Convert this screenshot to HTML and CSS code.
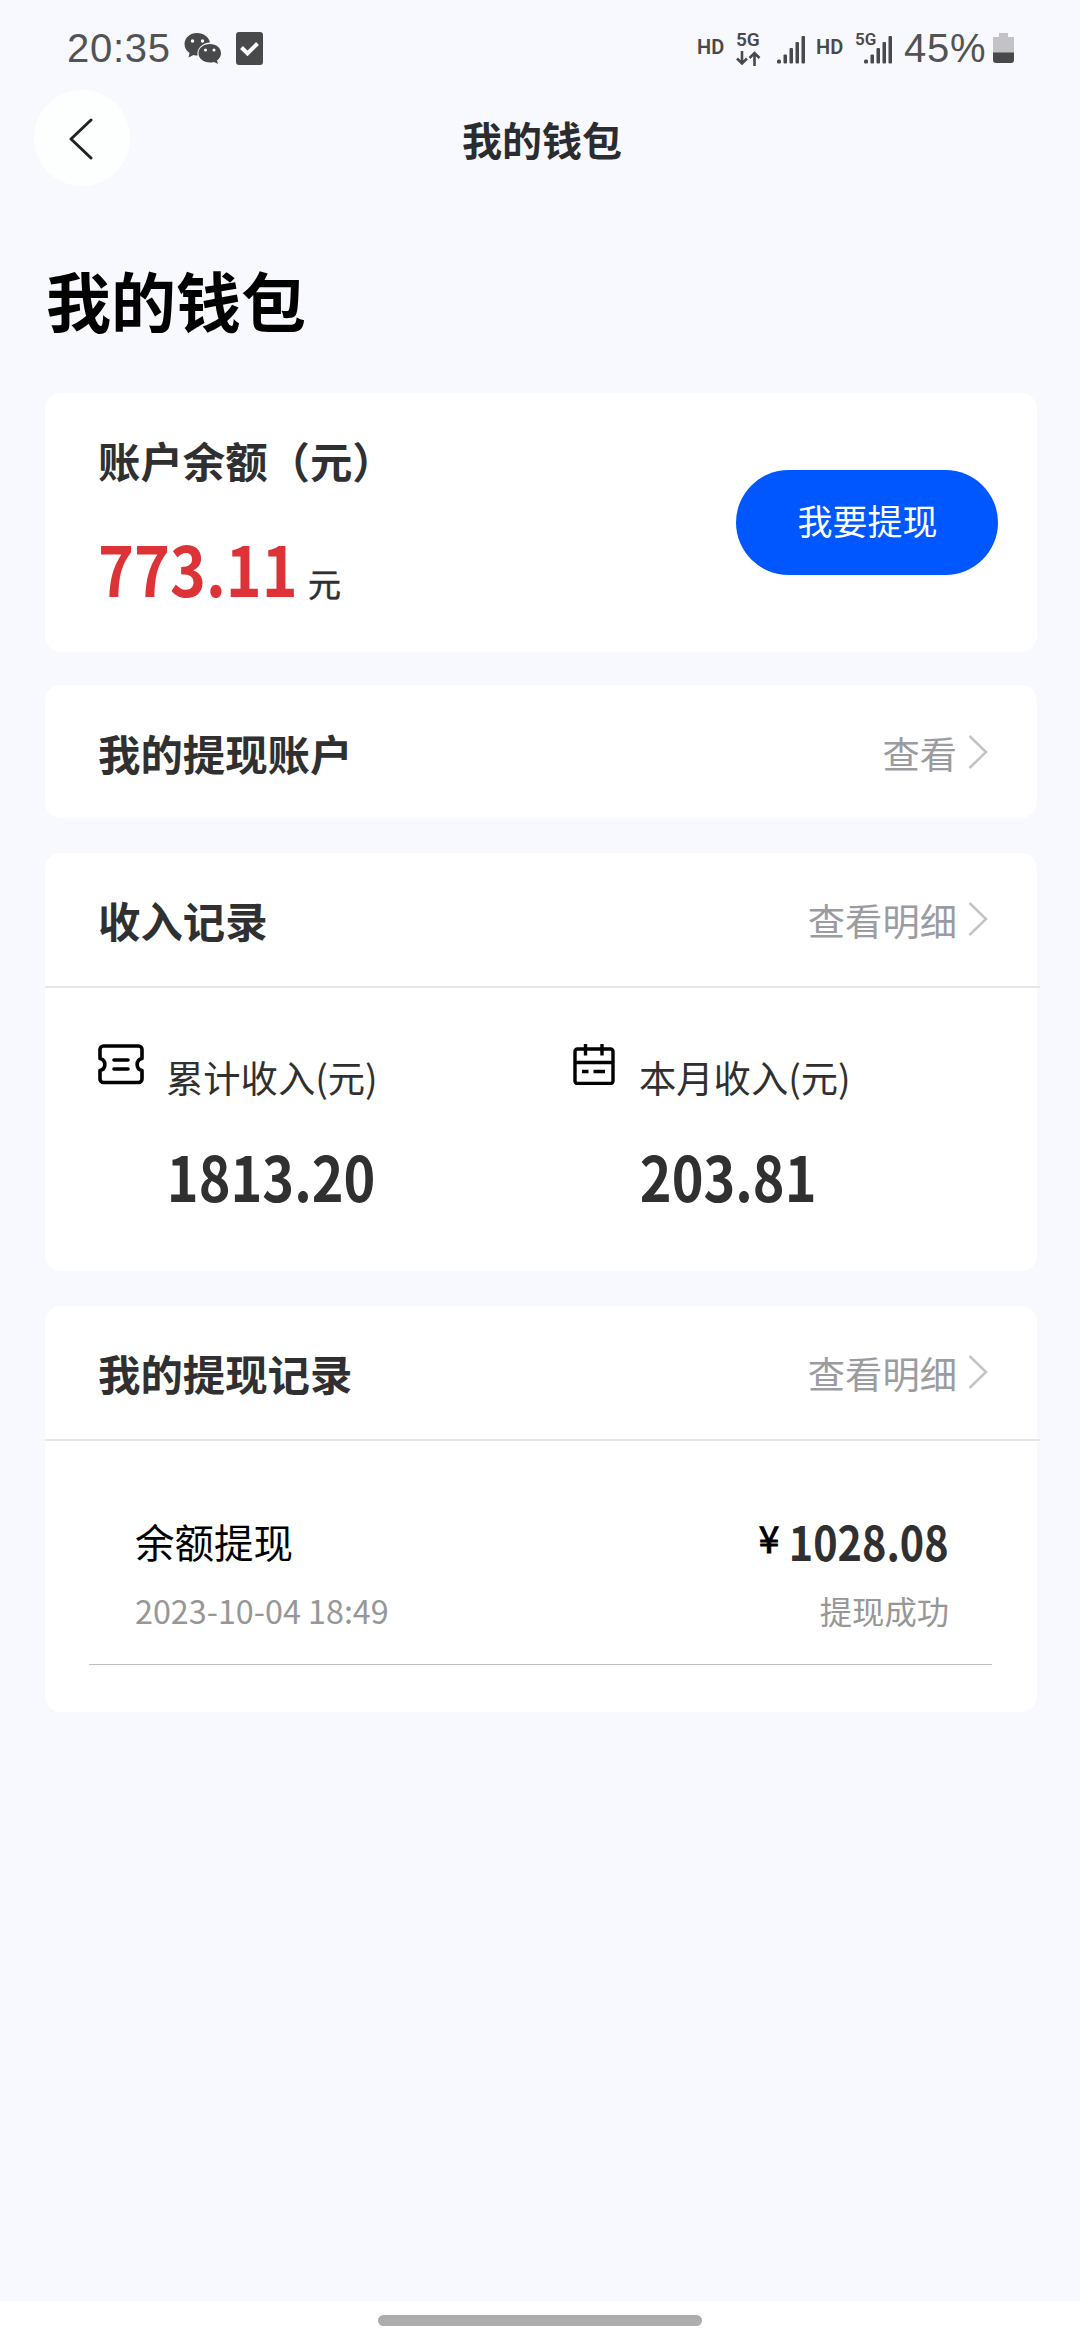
FILE: index.html
```html
<!DOCTYPE html>
<html lang="zh-CN">
<head>
    <meta charset="UTF-8">
    <meta name="viewport" content="width=device-width, initial-scale=1.0">
    <title>我的钱包</title>
    <link rel="stylesheet" href="styles.css">
</head>
<body>

<!-- Status bar -->
<div class="status-bar">
    <div class="status-left">
        <span class="time">20:35</span>
        <svg class="wechat" width="38" height="31" viewBox="0 0 38 31">
            <path fill="#48494b" d="M13 0C6 0 .5 4.800.5 11c0 4 2 7 5 9L4.500 24.500l5-2.500c1.500.4 2.500.5 4 .5C12.500 15 19 9.500 26 9.500 25 4 19.500 0 13 0z"/>
            <path fill="#48494b" d="M26 11c-6.500 0-11.500 4-11.500 9.300S19.500 29.500 26 29.500c1.500 0 2.700-.2 4-.6l4 2-1-3.400c2.500-1.700 4-4.200 4-7.200C37 15 32.500 11 26 11z"/>
            <circle cx="8.500" cy="8" r="1.700" fill="#fff"/>
            <circle cx="18.500" cy="8" r="1.700" fill="#fff"/>
            <circle cx="21.500" cy="17" r="1.500" fill="#fff"/>
            <circle cx="30" cy="17" r="1.500" fill="#fff"/>
        </svg>
        <svg class="check" width="27" height="33" viewBox="0 0 27 33">
            <rect width="27" height="33" rx="3" fill="#48494b"/>
            <path d="M5.500 15.500l6 6L21.500 11.500" fill="none" stroke="#fff" stroke-width="4"/>
        </svg>
    </div>
    <div class="status-right">
        <span class="hd">HD</span>
        <div class="net">
            <span>5G</span>
            <svg width="26" height="15" viewBox="0 0 26 15" fill="none" stroke="#48494b" stroke-width="2.600">
                <path d="M6 0v13M1 7.500l5 5 5-5M18.500 15V2M13.500 7l5-5 5 5"/>
            </svg>
        </div>
        <svg class="signal" width="28" height="28" viewBox="0 0 28 28" fill="#48494b">
            <rect x="0" y="23.500" width="4" height="4" rx="1.500"/>
            <rect x="6.500" y="18.500" width="3.500" height="9" rx="1"/>
            <rect x="12.500" y="12" width="3.500" height="15.500" rx="1"/>
            <rect x="18.500" y="6" width="3.500" height="21.500" rx="1"/>
            <rect x="24.500" y="0" width="3.500" height="27.500" rx="1"/>
        </svg>
        <span class="hd hd-second">HD</span>
        <div class="signal-5g">
            <span>5G</span>
            <svg width="28" height="28" viewBox="0 0 28 28" fill="#48494b">
                <rect x="0" y="23.500" width="4" height="4" rx="1.500"/>
                <rect x="6.500" y="18.500" width="3.500" height="9" rx="1"/>
                <rect x="12.500" y="12" width="3.500" height="15.500" rx="1"/>
                <rect x="18.500" y="6" width="3.500" height="21.500" rx="1"/>
                <rect x="24.500" y="0" width="3.500" height="27.500" rx="1"/>
            </svg>
        </div>
        <span class="percent">45%</span>
        <svg class="battery" width="21" height="30" viewBox="0 0 21 30">
            <path fill="#c3c3c5" d="M6 0h9v4h6v16H0V4h6z"/>
            <path fill="#48494b" d="M0 19.500h21V27a3 3 0 0 1-3 3H3a3 3 0 0 1-3-3z"/>
        </svg>
    </div>
</div>

<!-- Nav bar -->
<div class="nav-bar">
    <div class="back">
        <svg width="24" height="42" viewBox="0 0 24 42" fill="none" stroke="#222" stroke-width="3" stroke-linecap="round" stroke-linejoin="round">
            <path d="M22 2L2 21l20 19"/>
        </svg>
    </div>
    <div class="nav-title">我的钱包</div>
</div>

<h1 class="page-title">我的钱包</h1>

<div class="container">
    <!-- Balance -->
    <div class="card balance">
        <div>
            <div class="card-title">账户余额（元）</div>
            <div class="balance-row">
                <span class="balance-num">773.11</span>
                <span class="unit">元</span>
            </div>
        </div>
        <button class="withdraw">我要提现</button>
    </div>

    <!-- Withdraw account -->
    <div class="card">
        <div class="card-head">
            <span class="card-title">我的提现账户</span>
            <a class="more">查看
                <svg class="arrow" width="20" height="34" viewBox="0 0 20 34"><path d="M1.500 1L18 17 1.500 33"/></svg>
            </a>
        </div>
    </div>

    <!-- Income -->
    <div class="card income">
        <div class="card-head line">
            <span class="card-title">收入记录</span>
            <a class="more">查看明细
                <svg class="arrow" width="20" height="34" viewBox="0 0 20 34"><path d="M1.500 1L18 17 1.500 33"/></svg>
            </a>
        </div>
        <div class="stats">
            <div class="stat">
                <svg width="46" height="41" viewBox="0 0 46 41" fill="none" stroke="#000" stroke-width="3.600" stroke-linecap="round" stroke-linejoin="round">
                    <path d="M5.500 2h35A3.500 3.500 0 0 1 44 5.500V14.500a6.500 6.200 0 0 0 0 12V35a3.500 3.500 0 0 1-3.500 3.500h-35A3.500 3.500 0 0 1 2 35V26.500a6.500 6.200 0 0 0 0-12V5.500A3.500 3.500 0 0 1 5.500 2zM16 16h14M16 25h14"/>
                </svg>
                <div class="stat-text">
                    <div class="label">累计收入(元)</div>
                    <div class="number">1813.20</div>
                </div>
            </div>
            <div class="stat stat-month">
                <svg width="42" height="41" viewBox="0 0 42 41" fill="none" stroke="#000" stroke-width="3.400" stroke-linejoin="round">
                    <path d="M4.500 5h33A2.500 2.500 0 0 1 40 7.500V37a2.500 2.500 0 0 1-2.500 2.500h-33A2.500 2.500 0 0 1 2 37V7.500A2.500 2.500 0 0 1 4.500 5zM2 18.500h38M12.500 0v11.500M29 0v11.500M9 27.500h6.500M20.500 27.500H32"/>
                </svg>
                <div class="stat-text">
                    <div class="label">本月收入(元)</div>
                    <div class="number">203.81</div>
                </div>
            </div>
        </div>
    </div>

    <!-- Withdraw records -->
    <div class="card records">
        <div class="card-head line">
            <span class="card-title">我的提现记录</span>
            <a class="more">查看明细
                <svg class="arrow" width="20" height="34" viewBox="0 0 20 34"><path d="M1.500 1L18 17 1.500 33"/></svg>
            </a>
        </div>
        <div class="record">
            <div class="record-row">
                <span class="record-name">余额提现</span>
                <span class="amount"><span class="yen">¥</span><span class="amount-num">1028.08</span></span>
            </div>
            <div class="record-row sub">
                <span class="date">2023-10-04 18:49</span>
                <span>提现成功</span>
            </div>
        </div>
    </div>
</div>

<div class="home-bar"><div></div></div>

</body>
</html>
```
FILE: styles.css
```css
* {
    box-sizing: border-box;
}
body {
    margin: 0;
    height: 2340px;
    display: flex;
    flex-direction: column;
    background-color: #f8f9fe;
    font-family: "Noto Sans CJK SC", sans-serif;
    color: #303030;
}
svg {
    display: block;
    flex: none;
}

/* Status bar */
.status-bar {
    display: flex;
    justify-content: space-between;
    height: 90px;
    padding: 32px 66px 0 67px;
    font-family: Roboto, sans-serif;
    color: #48494b;
}
.status-left,
.status-right {
    display: flex;
    align-items: flex-start;
}
.time,
.percent {
    font-family: "Liberation Sans", Arial, sans-serif;
    font-size: 40px;
    line-height: 33px;
    letter-spacing: 0.7px;
    color: #525355;
}
.time {
    width: 117px;
}
.wechat {
    margin: 1px 14px 0 0;
}
.hd {
    width: 39px;
    margin-top: 5px;
    font-size: 20px;
    line-height: 21px;
    font-weight: 600;
}
.net {
    width: 41px;
    font-size: 19px;
    line-height: 15px;
    font-weight: 600;
}
.net svg {
    margin-top: 4px;
}
.signal {
    margin-top: 4px;
}
.hd-second {
    margin-left: 11px;
}
.signal-5g {
    position: relative;
    width: 37px;
    height: 34px;
    margin-right: 12px;
    padding: 4px 0 0 9px;
}
.signal-5g span {
    position: absolute;
    left: 0;
    top: 0;
    font-size: 17px;
    line-height: 14px;
    font-weight: 600;
}
.percent {
    width: 89px;
}
.battery {
    margin-top: 1px;
}

/* Nav bar */
.nav-bar {
    position: relative;
    display: flex;
    align-items: center;
    justify-content: center;
    height: 96px;
}
.back {
    position: absolute;
    left: 34px;
    top: 0;
    width: 96px;
    height: 96px;
    padding: 28px 0 0 35px;
    border-radius: 50%;
    background: #fdfffe;
}
.nav-title {
    padding: 2px 0 0 4px;
    font-size: 40px;
    font-weight: bold;
    color: #2b2c30;
}
.page-title {
    margin: 65px 0 0 46px;
    height: 142px;
    font-size: 65px;
    line-height: 96px;
    color: #000;
}

/* Cards */
.container {
    width: 992px;
    margin-left: 45px;
}
.card {
    height: 133px;
    margin-bottom: 35px;
    border-radius: 16px;
    background: #fff;
}
.card-title {
    font-size: 42.4px;
    line-height: 60px;
    font-weight: bold;
}
.card-head {
    display: flex;
    align-items: center;
    justify-content: space-between;
    height: 134px;
    padding: 1px 49px 0 53px;
}
.line {
    height: 135px;
    margin-right: -3px;
    padding-right: 52px;
    border-bottom: 2px solid #e6e8e7;
}
.more {
    display: flex;
    align-items: center;
    font-size: 37.3px;
    color: #9b9ca2;
}
.arrow {
    margin: -2px 0 0 11px;
    fill: none;
    stroke: #c4c4c8;
    stroke-width: 2.5;
}

/* Balance */
.balance {
    display: flex;
    justify-content: space-between;
    height: 259px;
    margin-bottom: 33px;
    padding: 37px 39px 0 53px;
}
.balance-row {
    display: flex;
    align-items: baseline;
    height: 100px;
    margin-top: 28px;
    line-height: 100px;
}
/* bold digits are wide, narrow them a bit */
.balance-num,
.number,
.amount-num {
    font-weight: bold;
    transform: scaleX(0.87);
    transform-origin: left center;
}
.balance-num {
    width: 210px;
    font-size: 68.5px;
    transform: scaleX(0.89);
    color: #dd3336;
}
.unit {
    font-size: 33px;
    -webkit-text-stroke: 0.5px currentColor;
}
.withdraw {
    width: 262px;
    height: 105px;
    margin-top: 40px;
    padding: 0 0 7px 1px;
    border: none;
    border-radius: 53px;
    background: #0057ff;
    color: #fff;
    font-family: inherit;
    font-size: 35px;
}

/* Income */
.income {
    height: 418px;
}
.stats {
    display: flex;
    padding: 56px 0 0 53px;
}
.stat {
    display: flex;
    flex: none;
    width: 475px;
}
.stat-text {
    margin-left: 22px;
}
.stat-month {
    width: 400px;
}
.stat-month .stat-text {
    margin-left: 24px;
}
.label {
    margin-top: 6px;
    font-size: 37.3px;
    line-height: 54px;
}
.number {
    margin-top: 23px;
    padding-left: 1px;
    font-size: 62px;
    line-height: 96px;
}

/* Withdraw records */
.records {
    height: 406px;
}
.record {
    height: 224px;
    margin: 0 45px 0 44px;
    padding: 70px 43px 0 46px;
    border-bottom: 1px solid #bfbfbf;
}
.record-row {
    display: flex;
    justify-content: space-between;
    height: 60px;
    line-height: 60px;
}
.record-name {
    font-size: 39.5px;
    color: #000;
}
.amount {
    display: flex;
}
.yen {
    margin-right: -12px;
    font-size: 37px;
    line-height: 53px;
    -webkit-text-stroke: 1px #000;
    color: #000;
}
.amount-num {
    font-size: 47px;
    transform: scaleX(0.88);
    transform-origin: right center;
}
.sub {
    margin-top: 9px;
    font-size: 32.3px;
    color: #979797;
}

/* Home indicator */
.home-bar {
    display: flex;
    justify-content: center;
    height: 39px;
    margin-top: auto;
    padding-top: 14px;
    background: #fff;
}
.home-bar div {
    width: 324px;
    height: 11px;
    border-radius: 6px;
    background: #adadad;
}
```
